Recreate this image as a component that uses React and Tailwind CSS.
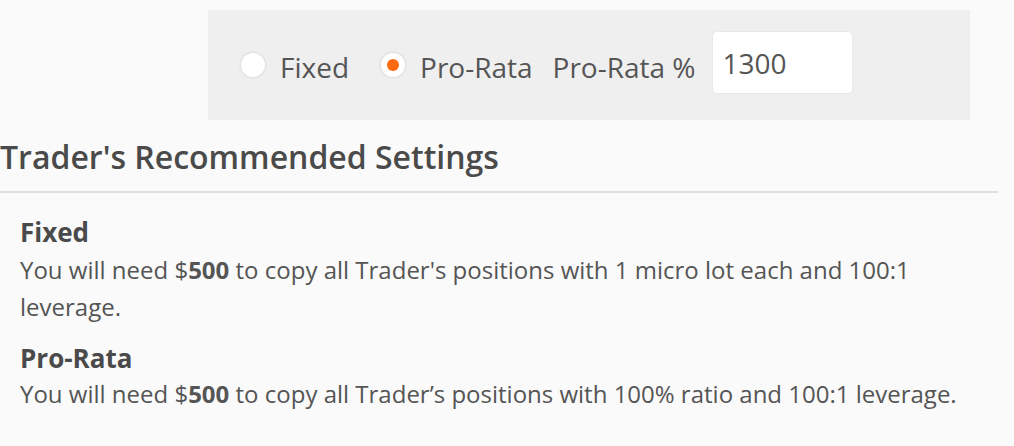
const font = { fontFamily: '"Open Sans", "Noto Sans", sans-serif' }

function Radio({ checked, label }) {
  return (
    <label className="flex items-center">
      <span className="flex h-[24px] w-[24px] items-center justify-center rounded-full bg-white shadow-[0_0_2px_1px_rgba(0,0,0,0.08)]">
        {checked && <span className="h-[12px] w-[12px] rounded-full bg-[#ff6a10]" />}
      </span>
      <span className="ml-[15px] mt-[4px]">{label}</span>
    </label>
  )
}

export default function App() {
  return (
    <div style={font} className="h-[446px] w-[1014px] overflow-hidden bg-[#fafafa] pt-[10px] text-[#555]">
      <div className="ml-[208px] flex h-[110px] w-[762px] items-center bg-[#efefef] pl-[33px] text-[28px]">
        <Radio label="Fixed" />
        <div className="ml-[32px]">
          <Radio checked label="Pro-Rata" />
        </div>
        <span className="ml-[20px] mt-[4px]">Pro-Rata %</span>
        <input
          defaultValue="1300"
          className="-mt-[5px] ml-[16px] h-[63px] w-[141px] rounded-[5px] border border-[#e8e8e8] bg-white px-[10px] text-[28px] text-[#555] outline-none"
        />
      </div>

      <h2 className="mt-[17px] w-[998px] border-b-2 border-[#dedede] pb-[14px] text-[32px] font-semibold leading-[40px] text-[#4a4a4a]">
        Trader's Recommended Settings
      </h2>

      <div className="w-[998px] pl-[20px] pt-[23px]">
        <h3 className="text-[26px] font-bold leading-[32px] text-[#4a4a4a]">Fixed</h3>
        <p className="mt-[3px] text-[24px] leading-[37px]">
          You will need $<b className="font-bold">500</b> to copy all Trader's positions with 1 micro lot each and 100:1 leverage.
        </p>
        <h3 className="mt-[17px] text-[26px] font-bold leading-[32px] text-[#4a4a4a]">Pro-Rata</h3>
        <p className="mt-[1px] text-[24px] leading-[37px]">
          You will need $<b className="font-bold">500</b> to copy all Trader’s positions with 100% ratio and 100:1 leverage.
        </p>
      </div>
    </div>
  )
}
